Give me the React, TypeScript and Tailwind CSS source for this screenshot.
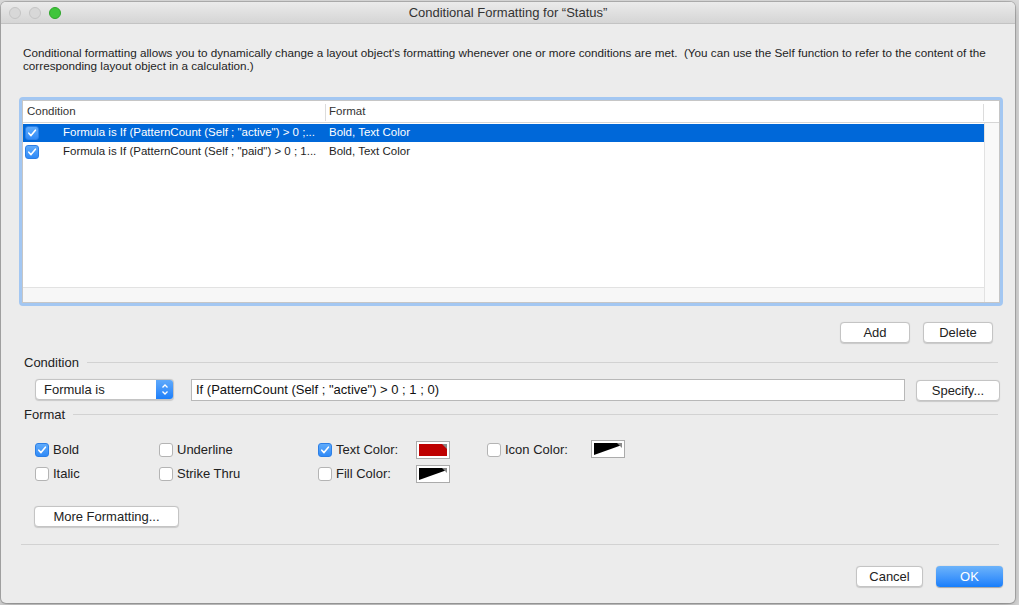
import React from 'react'

const sys = { fontFamily: '"Liberation Sans", Arial, sans-serif' }

function Check({ on }: { on?: boolean }) {
  return on ? (
    <span className="flex h-[14px] w-[14px] shrink-0 items-center justify-center rounded-[3px] bg-gradient-to-b from-[#5fabfb] to-[#2f8af7] border border-[#2c7fe6]">
      <svg width="10" height="10" viewBox="0 0 10 10">
        <path d="M1.8 5.2 L4 7.6 L8.4 2.2" fill="none" stroke="white" strokeWidth="1.6" strokeLinecap="round" strokeLinejoin="round" />
      </svg>
    </span>
  ) : (
    <span className="block h-[14px] w-[14px] shrink-0 rounded-[3px] border border-[#b4b4b4] bg-white" />
  )
}

function Swatch({ red }: { red?: boolean }) {
  return (
    <span className="relative block h-[18px] w-[34px] border border-[#ababab] bg-white p-[2px]">
      {red ? (
        <span className="block h-full w-full bg-[#be0000]" />
      ) : (
        <svg className="block h-full w-full" viewBox="0 0 28 12" preserveAspectRatio="none">
          <rect width="28" height="12" fill="white" />
          <polygon points="0,0 28,0 28,2 0,12" fill="black" />
        </svg>
      )}
      <svg className="absolute right-[2px] top-[2px]" width="5" height="5" viewBox="0 0 5 5">
        <polygon points="0,0 5,0 5,5" fill="#888" />
      </svg>
    </span>
  )
}

function Btn({ children, w, primary }: { children: React.ReactNode; w: string; primary?: boolean }) {
  return (
    <button
      className={
        primary
          ? `h-[21px] ${w} rounded-[4px] bg-gradient-to-b from-[#6cb3fa] to-[#157efb] text-[13px] text-white shadow-[0_0.5px_1px_rgba(0,0,0,0.3)]`
          : `h-[21px] ${w} rounded-[4px] border border-[#c4c4c4] bg-white text-[13px] text-[#222] shadow-[0_0.5px_1px_rgba(0,0,0,0.15)]`
      }
    >
      {children}
    </button>
  )
}

function Opt({ on, label, w }: { on?: boolean; label: string; w: string }) {
  return (
    <div className={`flex items-center gap-[4px] ${w}`}>
      <Check on={on} />
      <span className="text-[13px] text-[#222]">{label}</span>
    </div>
  )
}

export default function App() {
  const rows = [
    { text: 'Formula is If (PatternCount (Self ; "active") > 0 ;...', fmt: 'Bold, Text Color', sel: true },
    { text: 'Formula is If (PatternCount (Self ; "paid") > 0 ; 1...', fmt: 'Bold, Text Color', sel: false },
  ]

  return (
    <div className="h-[605px] w-[1019px] overflow-hidden bg-[#dcdcdc]" style={sys}>
      <div className="ml-px mt-[2px] flex h-[601px] w-[1014px] flex-col overflow-hidden rounded-[5px] bg-[#ececec] shadow-[0_0_0_1px_rgba(0,0,0,0.18),0_4px_12px_rgba(0,0,0,0.25)]">
        {/* title bar */}
        <div className="relative flex h-[22px] shrink-0 items-center justify-center border-b border-[#c3c3c3] bg-gradient-to-b from-[#ebebeb] to-[#d5d5d5]">
          <div className="absolute left-[8px] top-[5px] flex gap-[8px]">
            <span className="h-[12px] w-[12px] rounded-full border border-[#c4c4c4] bg-[#d8d8d8]" />
            <span className="h-[12px] w-[12px] rounded-full border border-[#c4c4c4] bg-[#d8d8d8]" />
            <span className="h-[12px] w-[12px] rounded-full border border-[#2ea52a] bg-[#3fc53b]" />
          </div>
          <span className="text-[13px] text-[#333]">Conditional Formatting for “Status”</span>
        </div>

        <div className="flex flex-1 flex-col pl-[18px] pr-[12px]">
          <p className="mt-[22px] pl-[4px] text-[11.7px] leading-[13px] text-[#1e1e1e]">
            Conditional formatting allows you to dynamically change a layout object's formatting whenever one or more conditions are met.&nbsp; (You can use the Self function to refer to the content of the corresponding layout object in a calculation.)
          </p>

          {/* table */}
          <div className="mt-[25px] h-[209px] rounded-[4px] border-[3px] border-[#a3c7f2]">
            <div className="flex h-full flex-col border border-[#c6c6c6] bg-white">
              <div className="flex h-[22px] shrink-0 items-center border-b border-[#d6d6d6] pt-px text-[11.5px] text-[#333]">
                <div className="w-[302px] pl-[4px]">Condition</div>
                <div className="h-[17px] w-px bg-[#dcdcdc]" />
                <div className="flex-1 pl-[3px]">Format</div>
                <div className="h-[17px] w-px bg-[#dcdcdc]" />
                <div className="w-[15px]" />
              </div>
              <div className="flex flex-1">
                <div className="flex flex-1 flex-col">
                  <div className="flex-1">
                    {rows.map((r) => (
                      <div
                        key={r.text}
                        className={`mt-px flex h-[18px] items-center text-[11.5px] ${r.sel ? 'bg-[#0068d9] text-white' : 'text-[#1e1e1e]'}`}
                      >
                        <div className="flex w-[303px] items-center pl-[2px]">
                          <Check on />
                          <span className="ml-[24px] whitespace-nowrap">{r.text}</span>
                        </div>
                        <span className="pl-[3px]">{r.fmt}</span>
                      </div>
                    ))}
                  </div>
                  <div className="h-[15px] border-t border-[#e2e2e2] bg-[#f7f7f7]" />
                </div>
                <div className="w-[15px] border-l border-[#e2e2e2] bg-[#f9f9f9]" />
              </div>
            </div>
          </div>

          <div className="mt-[16px] flex justify-end gap-[13px] pr-[10px]">
            <Btn w="w-[70px]">Add</Btn>
            <Btn w="w-[70px]">Delete</Btn>
          </div>

          {/* condition */}
          <div className="mt-[10px] flex items-center gap-[8px] pl-[5px] pr-[5px]">
            <span className="text-[13px] text-[#222]">Condition</span>
            <div className="h-px flex-1 bg-[#d2d2d2]" />
          </div>
          <div className="mt-[5px] flex items-center pl-[16px]">
            <div className="flex h-[21px] w-[139px] items-stretch overflow-hidden rounded-[4px] border border-[#c4c4c4] bg-white shadow-[0_0.5px_1px_rgba(0,0,0,0.15)]">
              <span className="flex-1 pl-[8px] text-[13px] leading-[19px] text-[#222]">Formula is</span>
              <span className="flex w-[17px] items-center justify-center bg-gradient-to-b from-[#5ea9fb] to-[#1b7ffa]">
                <svg width="8" height="13" viewBox="0 0 8 13">
                  <path d="M1.5 4.5 L4 2 L6.5 4.5 M1.5 8.5 L4 11 L6.5 8.5" fill="none" stroke="white" strokeWidth="1.3" />
                </svg>
              </span>
            </div>
            <div className="ml-[17px] flex h-[22px] w-[714px] items-center border border-[#b8b8b8] bg-white pl-[4px] text-[13px] text-[#111]">
              If (PatternCount (Self ; "active") &gt; 0 ; 1 ; 0)
            </div>
            <div className="ml-[11px]">
              <Btn w="w-[84px]">Specify...</Btn>
            </div>
          </div>

          {/* format */}
          <div className="mt-[3px] flex items-center gap-[8px] pl-[5px] pr-[5px]">
            <span className="text-[13px] text-[#222]">Format</span>
            <div className="h-px flex-1 bg-[#d2d2d2]" />
          </div>

          <div className="mt-[17px] flex flex-col gap-[6px] pl-[16px]">
            <div className="flex h-[18px] items-center">
              <Opt on label="Bold" w="w-[124px]" />
              <Opt label="Underline" w="w-[159px]" />
              <Opt on label="Text Color:" w="w-[98px]" />
              <Swatch red />
              <div className="ml-[37px] flex items-center">
                <Opt label="Icon Color:" w="w-[104px]" />
                <div className="-mt-[2px]"><Swatch /></div>
              </div>
            </div>
            <div className="flex h-[18px] items-center">
              <Opt label="Italic" w="w-[124px]" />
              <Opt label="Strike Thru" w="w-[159px]" />
              <Opt label="Fill Color:" w="w-[98px]" />
              <Swatch />
            </div>
          </div>

          <div className="mt-[21px] pl-[15px]">
            <Btn w="w-[145px]">More Formatting...</Btn>
          </div>

          <div className="ml-[2px] mr-[4px] mt-[16px] h-px bg-[#d2d2d2]" />

          <div className="mt-[21px] flex justify-end gap-[13px]">
            <Btn w="w-[67px]">Cancel</Btn>
            <Btn w="w-[67px]" primary>OK</Btn>
          </div>
        </div>
      </div>
    </div>
  )
}
